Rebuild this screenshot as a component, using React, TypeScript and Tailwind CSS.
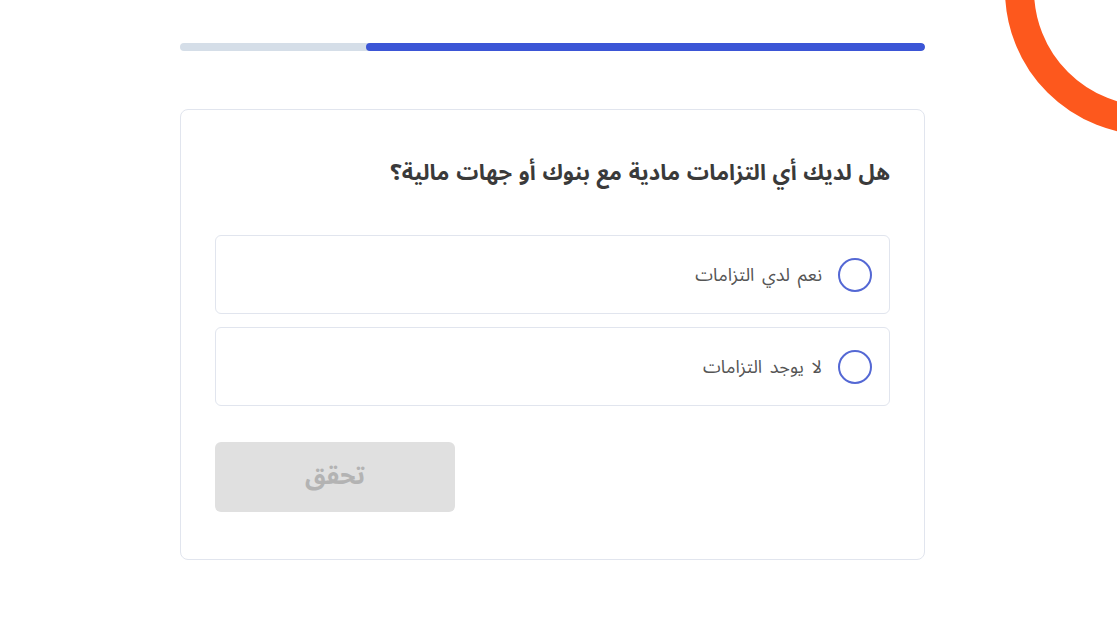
import React, { useState } from "react";

const options = [
  { id: "yes", label: "نعم لدي التزامات" },
  { id: "no", label: "لا يوجد التزامات" },
];

function OrangeRing() {
  return (
    <svg
      className="absolute top-0 right-0 pointer-events-none"
      width="140"
      height="150"
      viewBox="977 0 140 150"
      aria-hidden="true"
    >
      <circle cx="1150" cy="-10" r="130.5" fill="none" stroke="#FD581D" strokeWidth="29" />
    </svg>
  );
}

export default function App() {
  const [selected, setSelected] = useState<string | null>(null);

  return (
    <div
      className="relative w-full min-h-[628px] bg-white overflow-hidden"
      style={{ fontFamily: '"Noto Sans Arabic", "DejaVu Sans", sans-serif' }}
    >
      <OrangeRing />

      <div dir="rtl" className="w-[745px] ml-[180px] pt-[43px]">
        {/* progress */}
        <div className="h-2 w-full rounded-full bg-[#D5DEE8] overflow-hidden">
          <div className="h-full w-[75%] rounded-full bg-[#3B55D6]" />
        </div>

        <div className="mt-[58px] border border-[#E1E5EE] rounded-lg px-[34px] pt-[49px] pb-[47px]">
          <h2 className="text-[22px] leading-7 font-bold text-[#3A3A3A] [word-spacing:1px]">
            هل لديك أي التزامات مادية مع بنوك أو جهات مالية؟
          </h2>

          <div className="mt-[48px] flex flex-col gap-[13px]">
            {options.map((opt) => (
              <button
                key={opt.id}
                type="button"
                onClick={() => setSelected(opt.id)}
                className="h-[79px] w-full flex items-center gap-4 px-[17px] border border-[#E1E5EE] rounded-md bg-white text-right"
              >
                <span className="w-[34px] h-[34px] shrink-0 rounded-full border-2 border-[#5468D4] flex items-center justify-center">
                  {selected === opt.id && <span className="w-[18px] h-[18px] rounded-full bg-[#3B55D6]" />}
                </span>
                <span className="text-[18px] leading-6 text-[#555555] [word-spacing:3px]">{opt.label}</span>
              </button>
            ))}
          </div>

          <div className="mt-[36px] flex justify-end">
            <button
              type="button"
              disabled={!selected}
              className="w-[240px] h-[70px] rounded-md bg-[#E0E0E0] text-[25px] font-bold text-[#B3B3B3]"
            >
              تحقق
            </button>
          </div>
        </div>
      </div>
    </div>
  );
}
